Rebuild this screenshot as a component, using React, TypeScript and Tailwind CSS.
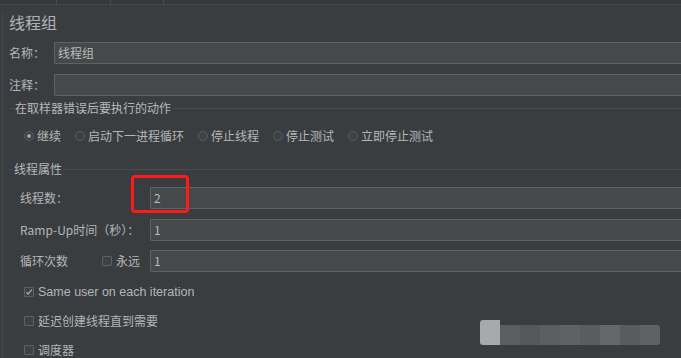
const font = "font-['Noto_Sans_CJK_SC','Noto_Sans',sans-serif]";

function Input({ value }: { value?: string }) {
  return (
    <div className="flex-1 h-[22px] bg-[#45494a] border border-r-0 border-[#5e6264] rounded-l-[2px] flex items-center pl-[3px] text-[12px] text-[#bbbbbb]">
      {value}
    </div>
  );
}

function Radio({ checked, label }: { checked?: boolean; label: string }) {
  return (
    <div className="flex items-center gap-[3px]">
      <span className="w-[10px] h-[10px] rounded-full border border-[#5b5e61] bg-[#3e4143] flex items-center justify-center">
        {checked && <span className="w-[4px] h-[4px] rounded-full bg-[#a0a3a5]" />}
      </span>
      <span>{label}</span>
    </div>
  );
}

function Check({ checked, label, latin }: { checked?: boolean; label: string; latin?: boolean }) {
  return (
    <div className="flex items-center gap-[4px] h-[16px]">
      <span className="w-[10px] h-[10px] border border-[#5e6164] bg-[#3e4143] rounded-[1px] flex items-center justify-center">
        {checked && (
          <svg width="8" height="8" viewBox="0 0 8 8">
            <path d="M1.3 4.2 L3.1 6 L6.8 1.6" stroke="#a9acae" strokeWidth="1.2" fill="none" />
          </svg>
        )}
      </span>
      <span className={latin ? "font-['Liberation_Sans',sans-serif] text-[12.5px]" : ""}>{label}</span>
    </div>
  );
}

function Legend({ text, left }: { text: string; left: string }) {
  return (
    <div className="flex items-center h-[16px]">
      <div className={`${left} h-px bg-[#4a4d50]`} />
      <span className="text-[12px] text-[#b6b8ba] px-[1px]">{text}</span>
      <div className="flex-1 h-px bg-[#4a4d50]" />
    </div>
  );
}

export default function App() {
  return (
    <div className={`${font} w-[681px] h-[358px] bg-[#3a3d40] overflow-hidden relative text-[12px] text-[#b4b6b8]`}>
      {/* top strip */}
      <div className="h-[5px] bg-[#35383b] border-b border-[#45484b] flex">
        <div className="w-[57px] border-r border-[#4a4d50]" />
        <div className="w-[54px] border-r border-[#4a4d50]" />
        <div className="w-[53px] border-r border-[#4a4d50]" />
      </div>

      <div className="ml-[2px] border-l border-[#44474a] h-full pl-[6px]">
        <div className="mt-[7px] h-[20px] leading-[20px] text-[16px] text-[#b0b3b5]">线程组</div>

        <div className="mt-[10px] flex items-center">
          <span className="w-[45px] text-[12px]">名称：</span>
          <Input value="线程组" />
        </div>
        <div className="mt-[10px] flex items-center">
          <span className="w-[45px] text-[12px]">注释：</span>
          <Input />
        </div>

        <div className="mt-[4px]">
          <Legend text="在取样器错误后要执行的动作" left="w-[5px]" />
        </div>

        <div className="mt-[12px] h-[16px] flex items-center pl-[15px] gap-[14px]">
          <Radio checked label="继续" />
          <Radio label="启动下一进程循环" />
          <Radio label="停止线程" />
          <Radio label="停止测试" />
          <Radio label="立即停止测试" />
        </div>

        <div className="mt-[17px]">
          <Legend text="线程属性" left="w-[4px]" />
        </div>

        <div className="mt-[10px] flex items-center">
          <span className="w-[141px] pl-[11px]">线程数：</span>
          <div className="flex-1 relative flex">
            <Input value="2" />
            <div className="absolute left-[-19px] top-[-12px] w-[58px] h-[38px] border-[3px] border-[#ff1a1a] rounded-[4px]" />
          </div>
        </div>
        <div className="mt-[10px] flex items-center">
          <span className="w-[141px] pl-[11px]">Ramp-Up时间（秒）：</span>
          <Input value="1" />
        </div>
        <div className="mt-[9px] flex items-center">
          <span className="w-[93px] pl-[11px]">循环次数</span>
          <div className="w-[48px] flex items-center gap-[4px]">
            <span className="w-[10px] h-[10px] border border-[#5e6164] bg-[#3e4143] rounded-[1px]" />
            <span>永远</span>
          </div>
          <Input value="1" />
        </div>

        <div className="pl-[15px]">
          <div className="mt-[12px]">
            <Check checked latin label="Same user on each iteration" />
          </div>
          <div className="mt-[13px]">
            <Check label="延迟创建线程直到需要" />
          </div>
          <div className="mt-[13px]">
            <Check label="调度器" />
          </div>
        </div>
      </div>

      {/* watermark */}
      <div className="absolute left-[480px] top-[320px] flex items-end">
        <div className="w-[20px] h-[25px] bg-[#a8a9ab] rounded-tl-[3px] rounded-bl-[3px]" />
        <div className="flex h-[20px] rounded-r-[3px] overflow-hidden">
          <div className="w-[20px] bg-[#5a5e60]" />
          <div className="w-[20px] bg-[#54585a]" />
          <div className="w-[20px] bg-[#5a5e60]" />
          <div className="w-[20px] bg-[#5e6264]" />
          <div className="w-[20px] bg-[#595d5f]" />
          <div className="w-[20px] bg-[#656869]" />
          <div className="w-[20px] bg-[#585c5e]" />
          <div className="w-[20px] bg-[#5e6263]" />
        </div>
      </div>
    </div>
  );
}
